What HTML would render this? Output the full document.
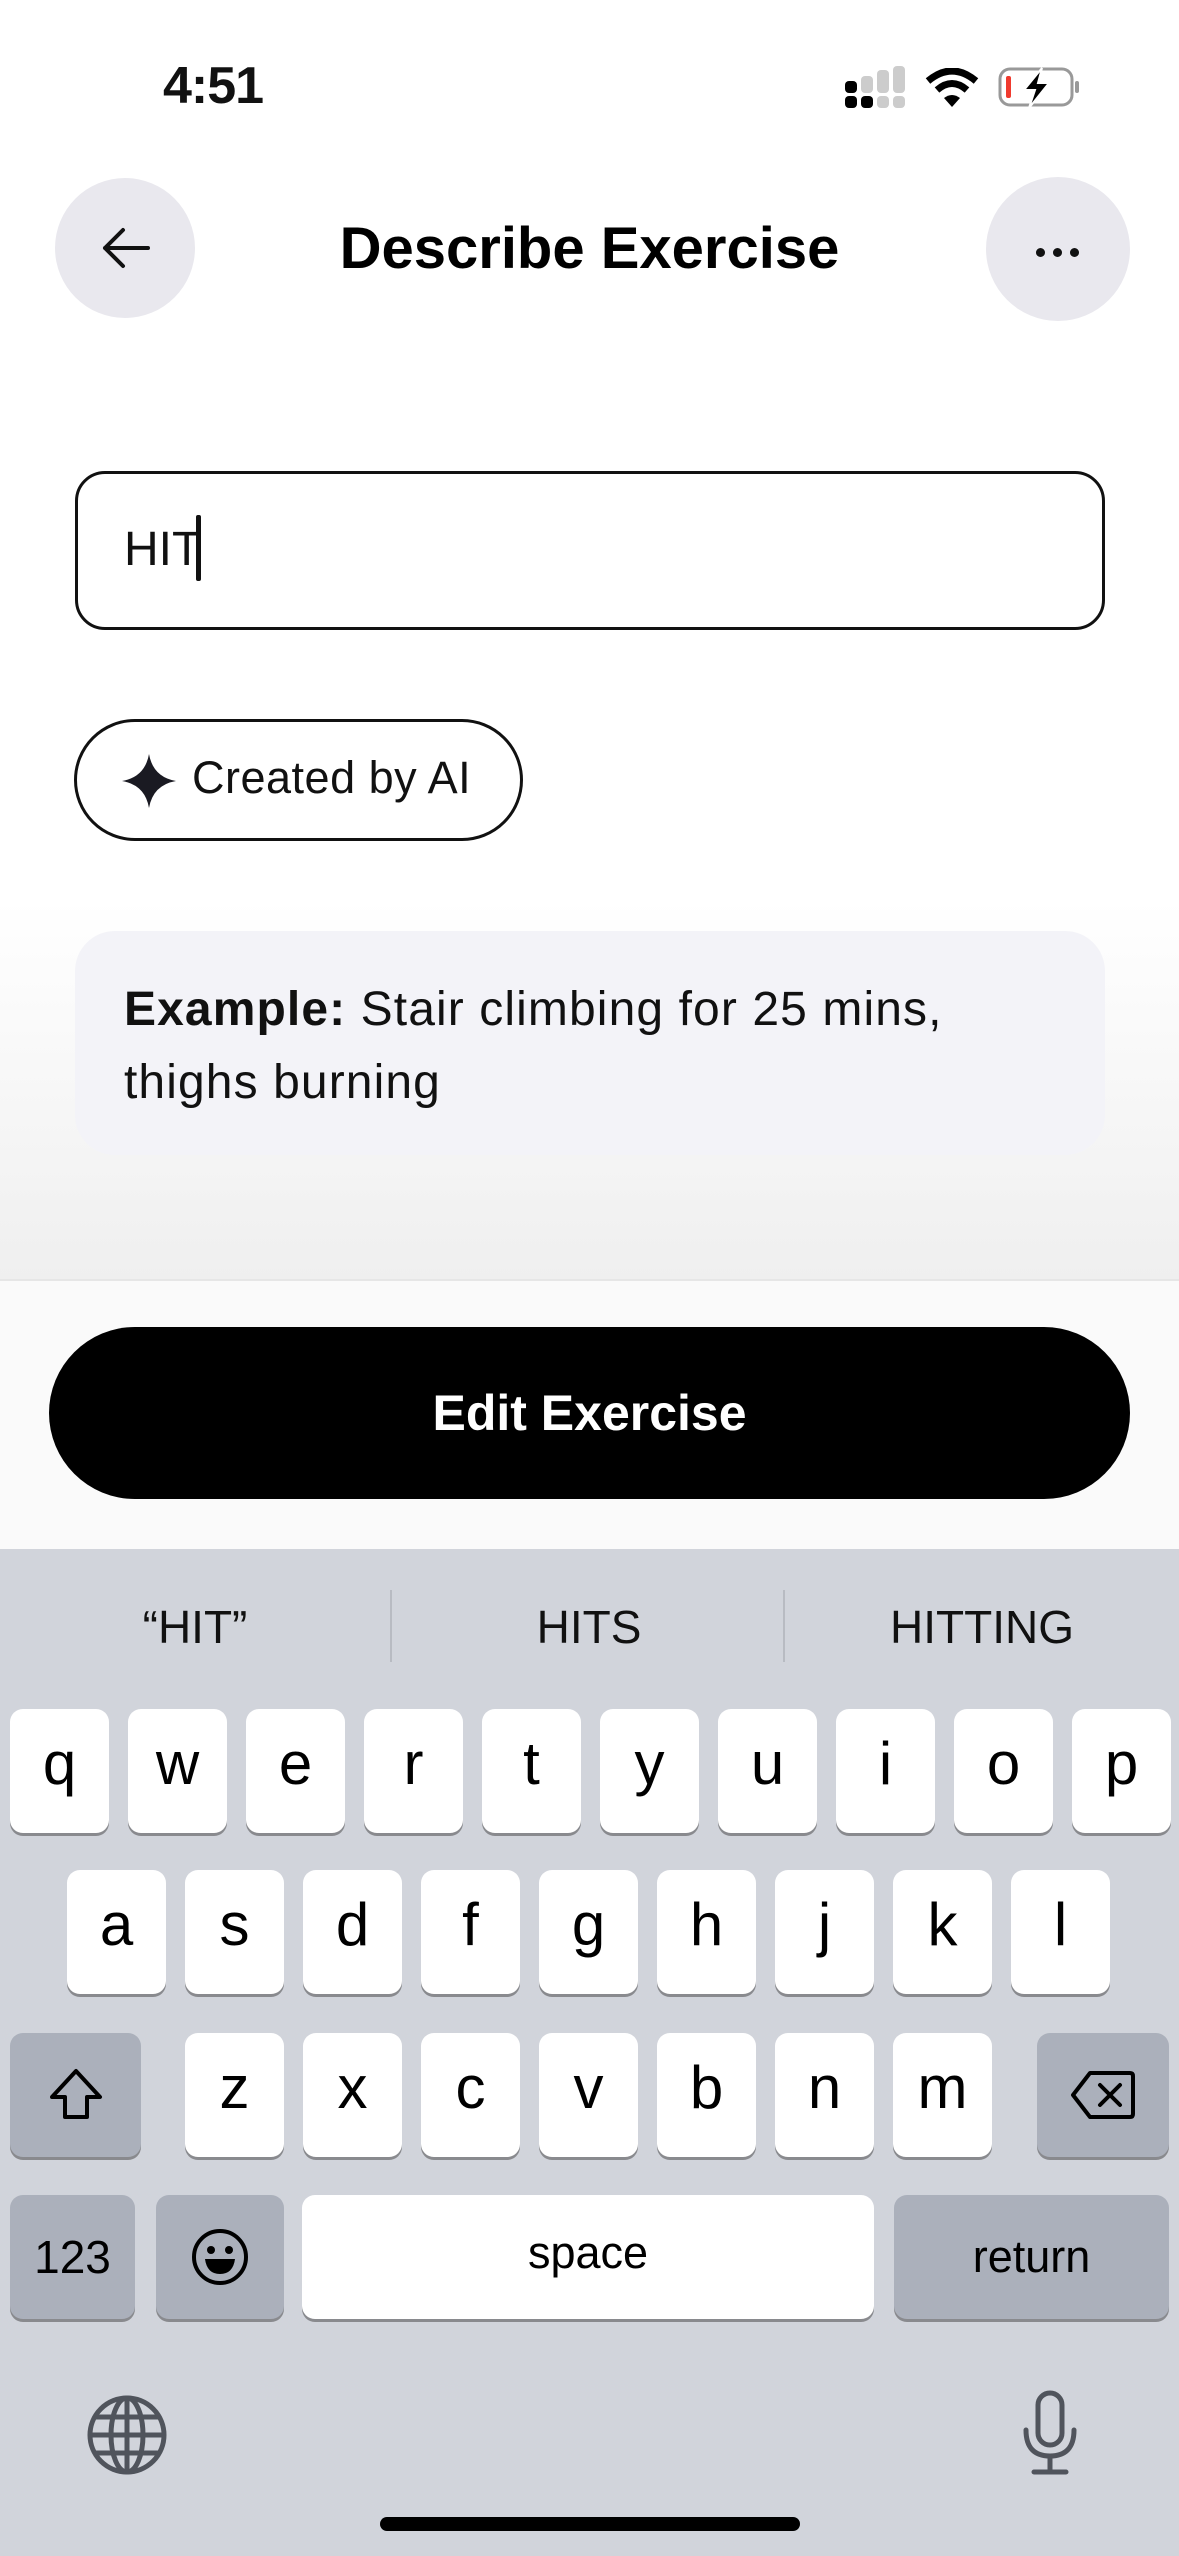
<!DOCTYPE html>
<html><head><meta charset="utf-8"><style>
*{margin:0;padding:0;box-sizing:border-box}
body{width:1179px;height:2556px;position:relative;overflow:hidden;background:#fff;font-family:"Liberation Sans",sans-serif;color:#111}
.a{position:absolute}
.grad{left:0;top:900px;width:1179px;height:380px;background:linear-gradient(#fff,#efefef)}
.circ{border-radius:50%;background:#e9e8ee}
.kb{left:0;top:1549px;width:1179px;height:1007px;background:#d1d4db}
.k{position:absolute;background:#fff;border-radius:13px;box-shadow:0 3px 0 #898a8e;text-align:center;font-size:60px;color:#000;line-height:110px;height:124px}
.g{background:#abb0bb}
.sg{position:absolute;top:1600px;font-size:46px;color:#111;text-align:center;width:390px}
</style></head><body>
<div class="a" style="left:163px;top:56px;font-size:52px;font-weight:bold;letter-spacing:-1px">4:51</div>
<svg class="a" style="left:845px;top:66px" width="60" height="42">
<rect x="0" y="15" width="12" height="12" rx="4" fill="#000"/><rect x="16" y="10" width="12" height="17" rx="4" fill="#ccc"/><rect x="32" y="4" width="12" height="23" rx="4" fill="#ccc"/><rect x="48" y="0" width="12" height="27" rx="4" fill="#ccc"/>
<rect x="0" y="30" width="12" height="12" rx="4" fill="#000"/><rect x="16" y="30" width="12" height="12" rx="4" fill="#000"/><rect x="32" y="30" width="12" height="12" rx="4" fill="#ccc"/><rect x="48" y="30" width="12" height="12" rx="4" fill="#ccc"/></svg>
<svg class="a" style="left:925px;top:68px" width="54" height="40" viewBox="0 0 54 40">
<path d="M3 13 Q27 -7 51 13" stroke="#000" stroke-width="7" fill="none"/><path d="M12 22 Q27 9 42 22" stroke="#000" stroke-width="7" fill="none"/><path d="M19 30 L27 39 L35 30 Q27 24 19 30Z" fill="#000"/></svg>
<svg class="a" style="left:998px;top:66px" width="84" height="42" viewBox="0 0 84 42">
<rect x="2" y="3" width="72" height="36" rx="10" fill="none" stroke="#999" stroke-width="3"/><rect x="77" y="15" width="4" height="12" rx="2" fill="#999"/><rect x="8" y="10" width="5" height="22" rx="2" fill="#f03a2e"/><path d="M44 2 L26 24 L37 24 L31 42 L51 17 L40 17 Z" fill="#000" stroke="#fff" stroke-width="2"/></svg>

<div class="a circ" style="left:55px;top:178px;width:140px;height:140px"></div>
<svg class="a" style="left:100px;top:225px" width="52" height="46" viewBox="0 0 52 46"><path d="M48 23 H5 M23 5 L5 23 L23 41" stroke="#111" stroke-width="4" fill="none" stroke-linecap="round" stroke-linejoin="round"/></svg>
<div class="a circ" style="left:986px;top:177px;width:144px;height:144px"></div>
<div class="a" style="left:1036px;top:244px"><span style="display:inline-block;width:9px;height:9px;border-radius:50%;background:#111;margin-right:8px"></span><span style="display:inline-block;width:9px;height:9px;border-radius:50%;background:#111;margin-right:8px"></span><span style="display:inline-block;width:9px;height:9px;border-radius:50%;background:#111"></span></div>
<div class="a" style="left:0;width:1179px;top:215px;text-align:center;font-size:58px;font-weight:bold;color:#000">Describe Exercise</div>

<div class="grad a"></div>
<div class="a" style="left:75px;top:471px;width:1030px;height:159px;border:3px solid #111;border-radius:30px;background:#fff"></div>
<div class="a" style="left:124px;top:522px;font-size:48px;color:#111">HIT</div>
<div class="a" style="left:196px;top:515px;width:5px;height:66px;background:#111;border-radius:2px"></div>

<div class="a" style="left:74px;top:719px;width:449px;height:122px;border:3px solid #111;border-radius:61px;background:#fff"></div>
<svg class="a" style="left:122px;top:754px" width="54" height="54" viewBox="0 0 54 54"><path d="M27 0 Q31 23 54 27 Q31 31 27 54 Q23 31 0 27 Q23 23 27 0Z" fill="#1a1a22"/></svg>
<div class="a" style="left:192px;top:752px;font-size:45px;color:#111;letter-spacing:0.5px">Created by AI</div>

<div class="a" style="left:75px;top:931px;width:1030px;height:224px;border-radius:40px;background:#f3f3f8"></div>
<div class="a" style="left:124px;top:973px;font-size:48px;line-height:73px;color:#111;width:980px;letter-spacing:1.1px"><b>Example:</b> Stair climbing for 25 mins,<br>thighs burning</div>

<div class="a" style="left:0;top:1279px;width:1179px;height:2px;background:#e6e6e6"></div>
<div class="a" style="left:0;top:1281px;width:1179px;height:268px;background:#fafafa"></div>
<div class="a" style="left:49px;top:1327px;width:1081px;height:172px;border-radius:86px;background:#000;color:#fff;font-size:50px;font-weight:bold;text-align:center;line-height:172px">Edit Exercise</div>

<div class="kb a"></div>
<div class="sg" style="left:0">“HIT”</div>
<div class="sg" style="left:394px">HITS</div>
<div class="sg" style="left:787px">HITTING</div>
<div class="a" style="left:390px;top:1590px;width:2px;height:72px;background:#b8bbc2"></div>
<div class="a" style="left:783px;top:1590px;width:2px;height:72px;background:#b8bbc2"></div>

<div class="k" style="left:10px;top:1709px;width:99px">q</div>
<div class="k" style="left:128px;top:1709px;width:99px">w</div>
<div class="k" style="left:246px;top:1709px;width:99px">e</div>
<div class="k" style="left:364px;top:1709px;width:99px">r</div>
<div class="k" style="left:482px;top:1709px;width:99px">t</div>
<div class="k" style="left:600px;top:1709px;width:99px">y</div>
<div class="k" style="left:718px;top:1709px;width:99px">u</div>
<div class="k" style="left:836px;top:1709px;width:99px">i</div>
<div class="k" style="left:954px;top:1709px;width:99px">o</div>
<div class="k" style="left:1072px;top:1709px;width:99px">p</div>

<div class="k" style="left:67px;top:1870px;width:99px">a</div>
<div class="k" style="left:185px;top:1870px;width:99px">s</div>
<div class="k" style="left:303px;top:1870px;width:99px">d</div>
<div class="k" style="left:421px;top:1870px;width:99px">f</div>
<div class="k" style="left:539px;top:1870px;width:99px">g</div>
<div class="k" style="left:657px;top:1870px;width:99px">h</div>
<div class="k" style="left:775px;top:1870px;width:99px">j</div>
<div class="k" style="left:893px;top:1870px;width:99px">k</div>
<div class="k" style="left:1011px;top:1870px;width:99px">l</div>

<div class="k g" style="left:10px;top:2033px;width:131px"><svg width="60" height="60" viewBox="0 0 60 60" style="margin-top:32px"><path d="M30 6 L54 32 H41 V52 H19 V32 H6 Z" fill="none" stroke="#000" stroke-width="4" stroke-linejoin="round"/></svg></div>
<div class="k" style="left:185px;top:2033px;width:99px">z</div>
<div class="k" style="left:303px;top:2033px;width:99px">x</div>
<div class="k" style="left:421px;top:2033px;width:99px">c</div>
<div class="k" style="left:539px;top:2033px;width:99px">v</div>
<div class="k" style="left:657px;top:2033px;width:99px">b</div>
<div class="k" style="left:775px;top:2033px;width:99px">n</div>
<div class="k" style="left:893px;top:2033px;width:99px">m</div>
<div class="k g" style="left:1037px;top:2033px;width:132px"><svg width="66" height="50" viewBox="0 0 66 50" style="margin-top:37px"><path d="M20 3 H60 Q63 3 63 6 V44 Q63 47 60 47 H20 L3 25 Z" fill="none" stroke="#000" stroke-width="4" stroke-linejoin="round"/><path d="M30 15 L50 35 M50 15 L30 35" stroke="#000" stroke-width="4" stroke-linecap="round"/></svg></div>

<div class="k g" style="left:10px;top:2195px;width:125px;font-size:46px;line-height:124px">123</div>
<div class="k g" style="left:156px;top:2195px;width:128px"><svg width="58" height="58" viewBox="0 0 58 58" style="margin-top:33px"><circle cx="29" cy="29" r="26" fill="none" stroke="#000" stroke-width="4"/><circle cx="20" cy="22" r="4"/><circle cx="38" cy="22" r="4"/><path d="M14 31 H44 Q42 46 29 46 Q16 46 14 31Z" fill="#000"/></svg></div>
<div class="k" style="left:302px;top:2195px;width:572px;font-size:45px;line-height:116px">space</div>
<div class="k g" style="left:894px;top:2195px;width:275px;font-size:45px;line-height:124px">return</div>

<svg class="a" style="left:85px;top:2393px" width="84" height="84" viewBox="0 0 84 84" fill="none" stroke="#50545c" stroke-width="5"><circle cx="42" cy="42" r="37"/><ellipse cx="42" cy="42" rx="16" ry="37"/><path d="M42 5 V79 M5 42 H79 M11 24 H73 M11 60 H73"/></svg>
<svg class="a" style="left:1020px;top:2390px" width="60" height="86" viewBox="0 0 60 86" fill="none" stroke="#50545c" stroke-width="5"><rect x="18" y="3" width="24" height="52" rx="12"/><path d="M6 40 Q6 66 30 66 Q54 66 54 40 M30 66 V82 M14 82 H46" stroke-linecap="round"/></svg>
<div class="a" style="left:380px;top:2517px;width:420px;height:14px;border-radius:7px;background:#000"></div>
</body></html>
